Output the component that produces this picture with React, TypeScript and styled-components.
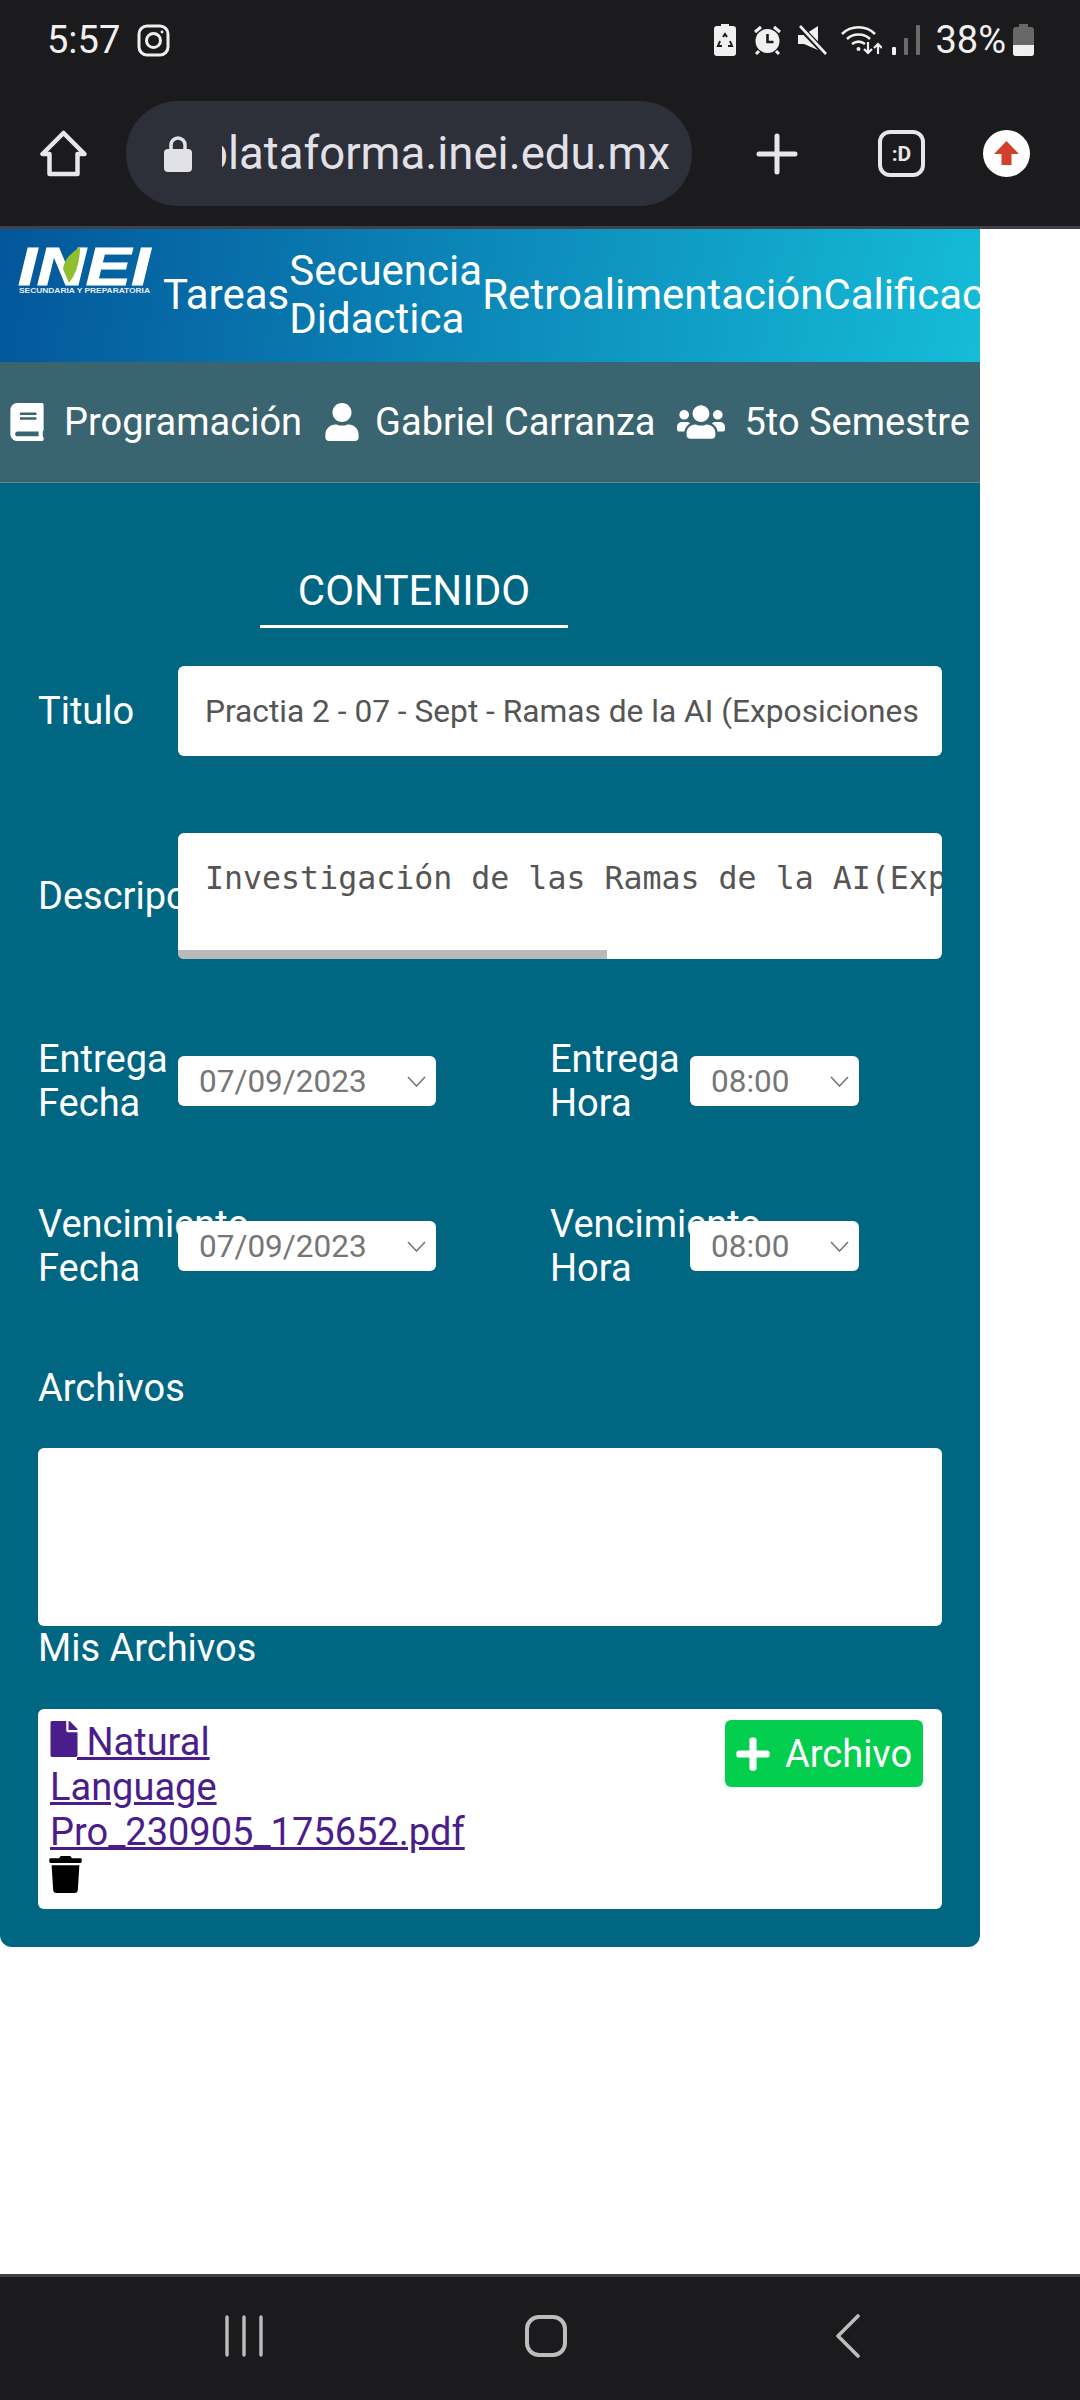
import styled, { createGlobalStyle } from "styled-components";
import { FaBook, FaFile, FaPlus, FaTrash, FaUser, FaUsers } from "react-icons/fa";

const GlobalStyle = createGlobalStyle`
  html, body {
    margin: 0;
    padding: 0;
    background: #fff;
  }
  * {
    box-sizing: border-box;
  }
`;

const Screen = styled.div`
  width: 1080px;
  height: 2400px;
  display: flex;
  flex-direction: column;
  overflow: hidden;
  font-family: Roboto, sans-serif;
  color: #fff;
`;

const StatusBar = styled.div`
  height: 80px;
  flex: none;
  background: #1b1b1d;
  display: flex;
  align-items: center;
  padding: 0 46px 0 47px;
  font-size: 38px;
  color: #f0f0f0;
`;

const Clock = styled.span`
  margin-right: 17px;
`;

const StatusRight = styled.div`
  margin-left: auto;
  display: flex;
  align-items: center;
`;

const StatusSlot = styled.div<{ $ml: number }>`
  display: flex;
  margin-left: ${(p) => p.$ml}px;
`;

const BrowserBar = styled.div`
  height: 149px;
  flex: none;
  background: #1b1b1d;
  border-bottom: 3px solid #3f424a;
  display: flex;
  align-items: flex-start;
  padding: 21px 50px 0 40px;
`;

const ToolIcon = styled.div`
  flex: none;
  margin-top: 29px;
  height: 47px;
  display: flex;
  align-items: center;
`;

const UrlPill = styled.div`
  flex: none;
  width: 566px;
  height: 105px;
  margin: 0 64px 0 39px;
  border-radius: 52px;
  background: #2d2f39;
  display: flex;
  align-items: center;
  padding: 0 22px 0 38px;
`;

const UrlText = styled.div`
  flex: 1;
  margin-left: 30px;
  overflow: hidden;
  display: flex;
  justify-content: flex-end;
  white-space: nowrap;
  font-size: 45.5px;
  color: #e3e1e8;
`;

const PlusSlot = styled(ToolIcon)`
  margin-right: 80px;
`;

const TabSlot = styled(ToolIcon)`
  margin-right: 58px;
`;

const TabCount = styled.div`
  width: 47px;
  height: 47px;
  border: 4px solid #e8e6ea;
  border-radius: 12px;
  display: flex;
  align-items: center;
  justify-content: center;
  font-size: 21px;
  font-weight: 700;
  color: #e8e6ea;
`;

const Page = styled.main`
  flex: 1;
  background: #fff;
`;

const Panel = styled.div`
  width: 980px;
  background: #016682;
  border-radius: 0 0 12px 12px;
  padding-bottom: 38px;
`;

const TopNav = styled.nav`
  height: 133px;
  background: linear-gradient(100deg, #03569a, #15bcd8);
  display: flex;
  align-items: center;
  padding: 0 0 2px 18px;
  overflow: hidden;
  font-size: 42px;
  line-height: 48px;
`;

const LogoSlot = styled.div`
  flex: none;
  width: 145px;
  align-self: flex-start;
  margin-top: 18px;
`;

const NavItem = styled.a<{ $wide?: boolean }>`
  flex: none;
  width: ${(p) => (p.$wide ? "193px" : "auto")};
`;

const InfoBar = styled.div`
  height: 121px;
  background: #3a6470;
  border-bottom: 1px solid #5b8a96;
  display: flex;
  align-items: center;
  padding-left: 8px;
  font-size: 38px;
  white-space: nowrap;
`;

const InfoItem = styled.div<{ $gap: number }>`
  display: flex;
  align-items: center;
  gap: ${(p) => p.$gap}px;
  margin-right: 21px;
  svg {
    flex: none;
  }
`;

const FormBody = styled.div`
  padding: 0 38px;
`;

const SectionTitle = styled.h2`
  width: 308px;
  margin: 86px 0 38px 222px;
  padding-bottom: 12px;
  border-bottom: 3px solid #fff;
  text-align: center;
  font-size: 42px;
  line-height: 44px;
  font-weight: 400;
`;

const FieldRow = styled.div<{ $gap: number }>`
  display: flex;
  align-items: center;
  margin-bottom: ${(p) => p.$gap}px;
`;

const Label = styled.div`
  flex: none;
  width: 140px;
  font-size: 38px;
  line-height: 44px;
  white-space: pre-line;
`;

const TitleInput = styled.div`
  flex: 1;
  height: 90px;
  background: #fff;
  border-radius: 6px;
  display: flex;
  align-items: center;
  padding: 0 24px 0 27px;
  overflow: hidden;
  white-space: nowrap;
  color: #555;
  font-size: 31.7px;
`;

const TextArea = styled.div`
  flex: 1;
  min-width: 0;
  height: 126px;
  background: #fff;
  border-radius: 6px;
  display: flex;
  flex-direction: column;
  overflow: hidden;
`;

const AreaText = styled.div`
  flex: 1;
  padding: 25px 0 0 27px;
  white-space: nowrap;
  font-family: "DejaVu Sans Mono", monospace;
  font-size: 31.6px;
  line-height: 40px;
  color: #555;
`;

const ScrollThumb = styled.div`
  width: 429px;
  height: 9px;
  background: #b9b9b9;
`;

const DateGrid = styled.div`
  display: grid;
  grid-template-columns: 512px 1fr;
  row-gap: 77px;
  margin-bottom: 76px;
`;

const DateField = styled.div`
  display: flex;
  align-items: center;
`;

const SelectBox = styled.div<{ $w: number }>`
  flex: none;
  width: ${(p) => p.$w}px;
  height: 50px;
  background: #fff;
  border-radius: 6px;
  display: flex;
  align-items: center;
  justify-content: space-between;
  padding: 0 10px 0 21px;
  color: #767676;
  font-size: 31.5px;
`;

const SectionLabel = styled.div`
  font-size: 38px;
  line-height: 44px;
`;

const DropBox = styled.div`
  height: 178px;
  margin-top: 38px;
  background: #fff;
  border-radius: 6px;
`;

const FilesBox = styled.div`
  height: 200px;
  margin-top: 39px;
  background: #fff;
  border-radius: 6px;
  padding: 11px 19px 0 12px;
  display: flex;
  justify-content: space-between;
  align-items: flex-start;
`;

const FileCol = styled.div`
  width: 250px;
  font-size: 38px;
  line-height: 45px;
`;

const FileLink = styled.a`
  color: #4b1d8b;
  text-decoration: underline;
  svg {
    vertical-align: -2px;
    margin: 0 -4.5px;
  }
`;

const TrashRow = styled.div`
  height: 40px;
  margin: 1px 0 0 -3px;
  color: #000;
  svg {
    display: block;
  }
`;

const AddButton = styled.button`
  flex: none;
  width: 198px;
  height: 67px;
  border: 0;
  border-radius: 6px;
  background: #04ce4e;
  color: #fff;
  font-family: inherit;
  font-size: 38px;
  display: flex;
  align-items: center;
  gap: 13px;
  padding: 0 0 0 9px;
`;

const BottomNav = styled.div`
  height: 126px;
  flex: none;
  background: #1b1b1d;
  border-top: 3px solid #3f424a;
  display: grid;
  grid-template-columns: 300px 311px auto;
  align-items: center;
  padding: 0 0 6px 225px;
`;

function Logo() {
  return (
    <svg width="136" height="46" viewBox="0 0 136 46" style={{ display: "block" }}>
      <text
        x="0"
        y="38"
        textLength="132"
        lengthAdjust="spacingAndGlyphs"
        fontFamily="Liberation Sans, sans-serif"
        fontWeight="700"
        fontStyle="italic"
        fontSize="53"
        fill="#fff"
        stroke="#fff"
        strokeWidth="1"
      >
        INEI
      </text>
      <path d="M62 0Q46 10 45 22L51 36Q62 22 62 0z" fill="#8fbf2f" />
      <text
        x="1"
        y="46"
        textLength="131"
        lengthAdjust="spacingAndGlyphs"
        fontFamily="Liberation Sans, sans-serif"
        fontWeight="700"
        fontSize="7.5"
        fill="#e6eef5"
      >
        SECUNDARIA Y PREPARATORIA
      </text>
    </svg>
  );
}

function Instagram() {
  return (
    <svg width="33" height="33" viewBox="0 0 33 33" fill="none" stroke="#f0f0f0" strokeWidth="3">
      <rect x="2" y="2" width="29" height="29" rx="8" />
      <circle cx="16.5" cy="16.5" r="7" />
      <circle cx="25" cy="8" r="1.4" fill="#f0f0f0" stroke="none" />
    </svg>
  );
}

function BatterySaver() {
  return (
    <svg width="22" height="32" viewBox="0 0 22 32">
      <path d="M7 0h8v2h4a3 3 0 0 1 3 3v24a3 3 0 0 1-3 3H3a3 3 0 0 1-3-3V5a3 3 0 0 1 3-3h4z" fill="#f0f0f0" />
      <path d="M9 13l2-3 2 3M16 17l2 5h-4M8 22H4l2-5" fill="none" stroke="#1b1b1d" strokeWidth="2" />
    </svg>
  );
}

function Alarm() {
  return (
    <svg width="29" height="30" viewBox="0 0 29 30">
      <circle cx="14.5" cy="16" r="12" fill="#f0f0f0" />
      <path d="M2 7l6-5M27 7l-6-5M6 26l-3 3M23 26l3 3" stroke="#f0f0f0" strokeWidth="3" fill="none" />
      <path d="M14.5 9v8h6" stroke="#1b1b1d" strokeWidth="2.6" fill="none" />
    </svg>
  );
}

function Muted() {
  return (
    <svg width="29" height="30" viewBox="0 0 29 30">
      <path d="M0 10h6l14-9v24L6 19H0z" fill="#f0f0f0" />
      <path d="M1 1l27 28" stroke="#1b1b1d" strokeWidth="6" />
      <path d="M2 1l26 28" stroke="#f0f0f0" strokeWidth="2.6" />
    </svg>
  );
}

function Wifi() {
  return (
    <svg width="41" height="30" viewBox="0 0 41 30" fill="none" stroke="#f0f0f0" strokeWidth="2.6">
      <path d="M1 9c9-9 24-9 33 0M6 14c6-6 17-6 23 0M11 19c4-3 9-3 13 0" />
      <circle cx="17.5" cy="24" r="2" fill="#f0f0f0" stroke="none" />
      <path d="M27 17v11M23 24l4 4 4-4M37 29V19M33 23l4-4 4 4" strokeWidth="2.2" />
    </svg>
  );
}

function Signal() {
  return (
    <svg width="28" height="30" viewBox="0 0 28 30">
      <rect x="0" y="22" width="4" height="8" rx="1" fill="#f0f0f0" />
      <rect x="12" y="13" width="4" height="17" rx="1" fill="#6b6b6b" />
      <rect x="24" y="0" width="4" height="30" rx="1" fill="#6b6b6b" />
    </svg>
  );
}

function Battery() {
  return (
    <svg width="21" height="32" viewBox="0 0 21 32">
      <path d="M6 0h9v3h3a3 3 0 0 1 3 3v23a3 3 0 0 1-3 3H3a3 3 0 0 1-3-3V6a3 3 0 0 1 3-3h3z" fill="#686868" />
      <path d="M0 21h21v8a3 3 0 0 1-3 3H3a3 3 0 0 1-3-3z" fill="#f0f0f0" />
    </svg>
  );
}

function HomeOutline() {
  return (
    <svg width="47" height="47" viewBox="0 0 47 47" fill="none" stroke="#e8e6ea" strokeWidth="4.5" strokeLinejoin="round">
      <path d="M23.5 3L2.5 24h7v20h28V24h7z" />
    </svg>
  );
}

function Lock() {
  return (
    <svg width="28" height="36" viewBox="0 0 28 36">
      <path d="M7 15V9a7 7 0 0 1 14 0v6" fill="none" stroke="#e3e1e8" strokeWidth="3.5" />
      <rect x="0" y="13" width="28" height="23" rx="4" fill="#e3e1e8" />
    </svg>
  );
}

function PlusIcon() {
  return (
    <svg width="42" height="42" viewBox="0 0 42 42" stroke="#e8e6ea" strokeWidth="5" strokeLinecap="round">
      <path d="M21 3v36M3 21h36" />
    </svg>
  );
}

function UploadBadge() {
  return (
    <svg width="47" height="47" viewBox="0 0 47 47">
      <circle cx="23.5" cy="23.5" r="23.5" fill="#fff" />
      <path d="M23.5 11L36 24h-7.5v11h-10V24H11z" fill="#d2402c" />
    </svg>
  );
}

function Chevron() {
  return (
    <svg width="19" height="11" viewBox="0 0 19 11" fill="none" stroke="#767676" strokeWidth="1.6">
      <path d="M1 1l8.5 9L18 1" />
    </svg>
  );
}

function RecentsKey() {
  return (
    <svg width="38" height="42" viewBox="0 0 38 42" stroke="#bdbdbd" strokeWidth="3.4" strokeLinecap="round">
      <path d="M2 2v38M19 2v38M36 2v38" />
    </svg>
  );
}

function HomeKey() {
  return (
    <svg width="42" height="42" viewBox="0 0 42 42" fill="none" stroke="#bdbdbd" strokeWidth="4">
      <rect x="2" y="2" width="38" height="38" rx="12" />
    </svg>
  );
}

function BackKey() {
  return (
    <svg width="24" height="44" viewBox="0 0 24 44" fill="none" stroke="#bdbdbd" strokeWidth="3.6" strokeLinecap="round" strokeLinejoin="round">
      <path d="M22 2L2 22l20 20" />
    </svg>
  );
}

function DateRow({ first, second, date }: { first: string; second: string; date: string }) {
  return (
    <>
      <DateField>
        <Label>{first}</Label>
        <SelectBox $w={258}>
          {date}
          <Chevron />
        </SelectBox>
      </DateField>
      <DateField>
        <Label>{second}</Label>
        <SelectBox $w={169}>
          08:00
          <Chevron />
        </SelectBox>
      </DateField>
    </>
  );
}

function App() {
  return (
    <>
      <GlobalStyle />
      <Screen>
        <StatusBar>
          <Clock>5:57</Clock>
          <Instagram />
          <StatusRight>
            <BatterySaver />
            <StatusSlot $ml={17}>
              <Alarm />
            </StatusSlot>
            <StatusSlot $ml={16}>
              <Muted />
            </StatusSlot>
            <StatusSlot $ml={14}>
              <Wifi />
            </StatusSlot>
            <StatusSlot $ml={10}>
              <Signal />
            </StatusSlot>
            <StatusSlot $ml={15}>38%</StatusSlot>
            <StatusSlot $ml={7}>
              <Battery />
            </StatusSlot>
          </StatusRight>
        </StatusBar>
        <BrowserBar>
          <ToolIcon>
            <HomeOutline />
          </ToolIcon>
          <UrlPill>
            <Lock />
            <UrlText>plataforma.inei.edu.mx</UrlText>
          </UrlPill>
          <PlusSlot>
            <PlusIcon />
          </PlusSlot>
          <TabSlot>
            <TabCount>:D</TabCount>
          </TabSlot>
          <ToolIcon>
            <UploadBadge />
          </ToolIcon>
        </BrowserBar>
        <Page>
          <Panel>
            <TopNav>
              <LogoSlot>
                <Logo />
              </LogoSlot>
              <NavItem>Tareas</NavItem>
              <NavItem $wide>Secuencia Didactica</NavItem>
              <NavItem>Retroalimentación</NavItem>
              <NavItem>Calificaciones</NavItem>
            </TopNav>
            <InfoBar>
              <InfoItem $gap={18}>
                <FaBook size={38} />
                Programación
              </InfoItem>
              <InfoItem $gap={14}>
                <FaUser size={38} />
                Gabriel Carranza
              </InfoItem>
              <InfoItem $gap={20}>
                <FaUsers size={48} />
                5to Semestre
              </InfoItem>
            </InfoBar>
            <FormBody>
              <SectionTitle>CONTENIDO</SectionTitle>
              <FieldRow $gap={77}>
                <Label>Titulo</Label>
                <TitleInput>Practia 2 - 07 - Sept - Ramas de la AI (Exposiciones</TitleInput>
              </FieldRow>
              <FieldRow $gap={78}>
                <Label>Descripción</Label>
                <TextArea>
                  <AreaText>Investigación de las Ramas de la AI(Exposiciones)</AreaText>
                  <ScrollThumb />
                </TextArea>
              </FieldRow>
              <DateGrid>
                <DateRow first={"Entrega\nFecha"} second={"Entrega\nHora"} date="07/09/2023" />
                <DateRow first={"Vencimiento\nFecha"} second={"Vencimiento\nHora"} date="07/09/2023" />
              </DateGrid>
              <SectionLabel>Archivos</SectionLabel>
              <DropBox />
              <SectionLabel>Mis Archivos</SectionLabel>
              <FilesBox>
                <FileCol>
                  <FileLink>
                    <FaFile size={36} /> Natural Language Pro_230905_175652.pdf
                  </FileLink>
                  <TrashRow>
                    <FaTrash size={37} />
                  </TrashRow>
                </FileCol>
                <AddButton>
                  <FaPlus size={38} />
                  Archivo
                </AddButton>
              </FilesBox>
            </FormBody>
          </Panel>
        </Page>
        <BottomNav>
          <RecentsKey />
          <HomeKey />
          <BackKey />
        </BottomNav>
      </Screen>
    </>
  );
}

export default App;
